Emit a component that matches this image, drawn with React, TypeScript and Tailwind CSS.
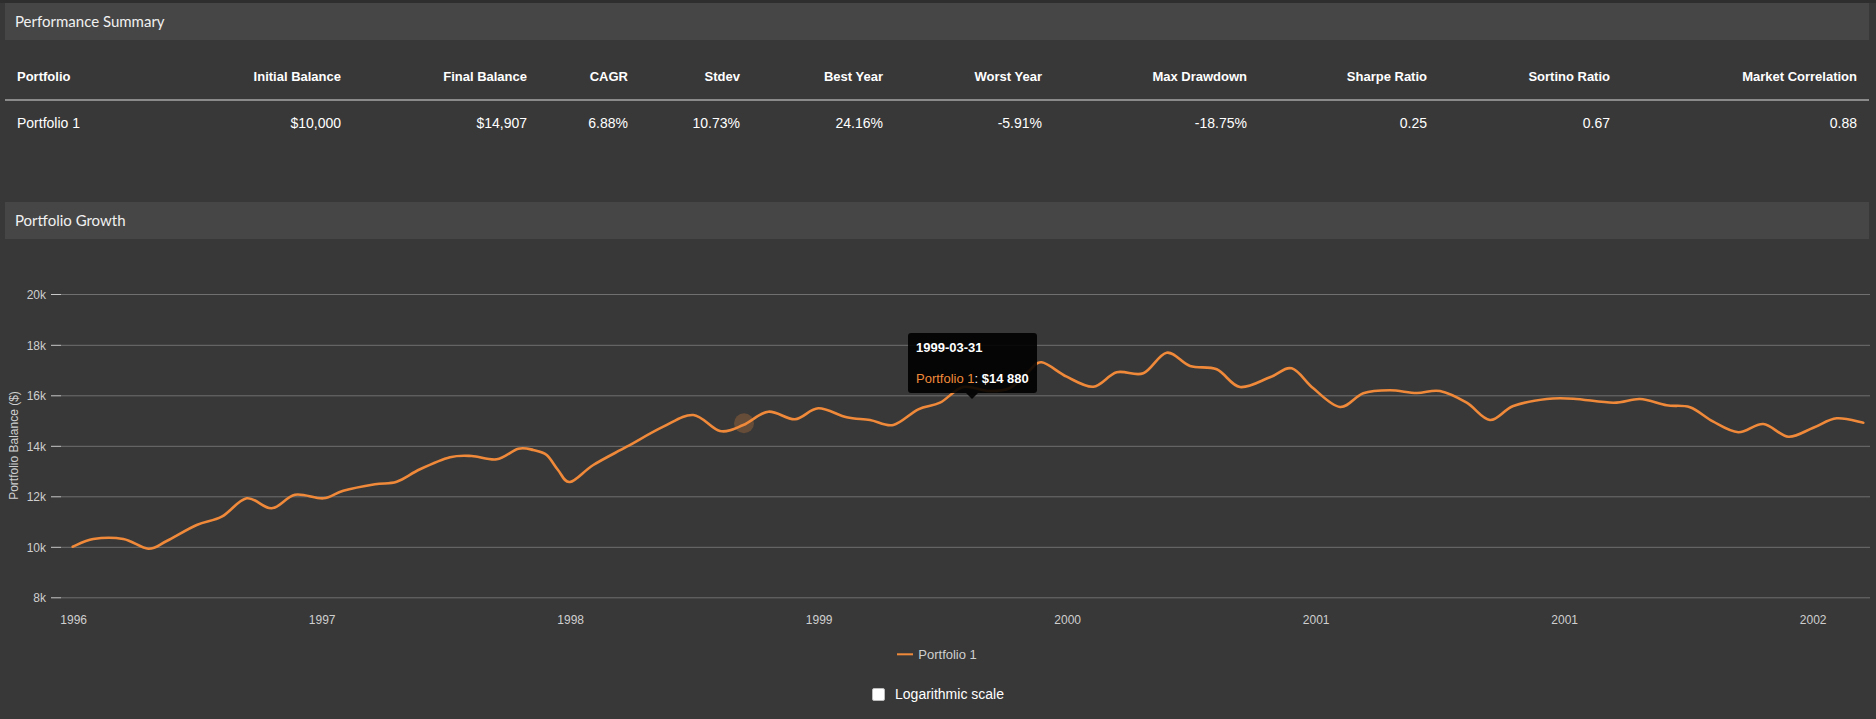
import React from "react";

const PTS: [number, number][] = [
  [72.7, 546.7], [93.3, 539], [123.3, 539], [148.3, 548.7], [166.7, 541], [196.7, 525],
  [221.7, 516.7], [246.7, 498.3], [271.7, 508.3], [295, 494.7], [323.3, 498.3], [343.3, 490.7],
  [375, 484.3], [396.7, 481.7], [420, 469.3], [450, 457.3], [471.7, 456], [496.7, 459.3],
  [518.3, 448.7], [533.3, 450], [546.7, 455], [558, 470], [570, 482], [593.3, 465],
  [626.7, 446.7], [663.3, 426.7], [693.3, 415], [720, 431], [743.3, 425], [768.3, 411.7],
  [795, 419.3], [818.3, 408.3], [846.7, 417.3], [870, 420], [893.3, 425], [918.3, 409.3],
  [940, 402.7], [963, 387], [988, 391], [1010, 388], [1028, 372], [1041.7, 362.3],
  [1066.7, 376.7], [1093.3, 386.7], [1116.7, 372.3], [1143.3, 373.3], [1166.7, 352.7],
  [1190, 366], [1216.7, 369.3], [1240, 387], [1270, 377.3], [1291.7, 368.3], [1313.3, 388.3],
  [1340, 407], [1363.3, 393.3], [1390, 390.3], [1416.7, 393], [1440, 391], [1466.7, 402.7],
  [1490, 420], [1513.3, 406], [1546.7, 399], [1573.3, 398.7], [1613.3, 402.7], [1640, 399],
  [1666.7, 405.3], [1690, 407.3], [1713.3, 421.7], [1738.3, 432.3], [1763.3, 424],
  [1788.3, 436.7], [1813.3, 427.7], [1836.7, 418.3], [1863.3, 422.7],
];

function smoothPath(pts: [number, number][]): string {
  let d = `M${pts[0][0]},${pts[0][1]}`;
  for (let i = 0; i < pts.length - 1; i++) {
    const p0 = pts[i - 1] || pts[i];
    const p1 = pts[i];
    const p2 = pts[i + 1];
    const p3 = pts[i + 2] || p2;
    const c1x = p1[0] + (p2[0] - p0[0]) / 6;
    const c1y = p1[1] + (p2[1] - p0[1]) / 6;
    const c2x = p2[0] - (p3[0] - p1[0]) / 6;
    const c2y = p2[1] - (p3[1] - p1[1]) / 6;
    d += ` C${c1x.toFixed(1)},${c1y.toFixed(1)} ${c2x.toFixed(1)},${c2y.toFixed(1)} ${p2[0]},${p2[1]}`;
  }
  return d;
}

const GRID = [
  { label: "20k", y: 294.5 },
  { label: "18k", y: 345.3 },
  { label: "16k", y: 395.8 },
  { label: "14k", y: 446.3 },
  { label: "12k", y: 496.8 },
  { label: "10k", y: 547.3 },
  { label: "8k", y: 597.8 },
];

const XLABELS = ["1996", "1997", "1998", "1999", "2000", "2001", "2001", "2002"];

const HEAD = [
  "Portfolio",
  "Initial Balance",
  "Final Balance",
  "CAGR",
  "Stdev",
  "Best Year",
  "Worst Year",
  "Max Drawdown",
  "Sharpe Ratio",
  "Sortino Ratio",
  "Market Correlation",
];
const ROW = ["Portfolio 1", "$10,000", "$14,907", "6.88%", "10.73%", "24.16%", "-5.91%", "-18.75%", "0.25", "0.67", "0.88"];

const ORANGE = "#f08a3a";

export default function App() {
  const path = smoothPath(PTS);
  return (
    <div className="w-[1876px] min-h-[719px] bg-[#383838] font-['Liberation_Sans',Arial,sans-serif]">
      <div className="h-[3px] bg-[#2e2e2e]" />
      <div className="ml-[5px] mr-[7px]">
        <div className="h-[37px] bg-[#464646] flex items-center pl-[10px] font-['Lato',sans-serif] text-[15px] text-[#f0f0f0]">
          Performance Summary
        </div>
        <div className="mt-[20px]">
          <div className="grid grid-cols-[180px_168px_186px_101px_112px_143px_159px_205px_180px_183px_1fr] border-b-2 border-[#8a8a8a]">
            {HEAD.map((h, i) => (
              <div
                key={h}
                className={`pt-[8px] pb-[13px] px-[12px] leading-[18px] text-[13px] font-bold text-white ${i === 0 ? "text-left" : "text-right"}`}
              >
                {h}
              </div>
            ))}
          </div>
          <div className="grid grid-cols-[180px_168px_186px_101px_112px_143px_159px_205px_180px_183px_1fr]">
            {ROW.map((v, i) => (
              <div
                key={i}
                className={`pt-[13px] pb-[13px] px-[12px] leading-[18px] text-[14px] text-white ${i === 0 ? "text-left" : "text-right"}`}
              >
                {v}
              </div>
            ))}
          </div>
        </div>
        <div className="mt-[57px] h-[37px] bg-[#464646] flex items-center pl-[10px] font-['Lato',sans-serif] text-[15px] text-[#f0f0f0]">
          Portfolio Growth
        </div>
      </div>

      <div className="relative">
        <svg width={1876} height={432} viewBox="0 239 1876 432" className="block">
          {GRID.map((g) => (
            <g key={g.label}>
              <line x1={51} x2={61} y1={g.y} y2={g.y} stroke="#c8c8c8" strokeWidth={1} />
              <line x1={61} x2={1870} y1={g.y} y2={g.y} stroke="#707070" strokeWidth={1} />
              <text
                x={46}
                y={g.y + 4.3}
                textAnchor="end"
                fontSize={12}
                fill="#cfcfcf"
                fontFamily="'Liberation Sans', Arial, sans-serif"
              >
                {g.label}
              </text>
            </g>
          ))}
          {XLABELS.map((l, i) => (
            <text
              key={i}
              x={73.7 + 248.5 * i}
              y={624.3}
              textAnchor="middle"
              fontSize={12}
              fill="#cfcfcf"
              fontFamily="'Liberation Sans', Arial, sans-serif"
            >
              {l}
            </text>
          ))}
          <text
            transform="translate(17.5,445.5) rotate(-90)"
            textAnchor="middle"
            fontSize={12}
            fill="#cfcfcf"
            fontFamily="'Liberation Sans', Arial, sans-serif"
          >
            Portfolio Balance ($)
          </text>
          <path d={path} fill="none" stroke={ORANGE} strokeWidth={2.6} strokeLinejoin="round" strokeLinecap="round" />
          <circle cx={744} cy={423.3} r={10} fill={ORANGE} fillOpacity={0.25} />
          <line x1={897} x2={913} y1={654.3} y2={654.3} stroke={ORANGE} strokeWidth={2} />
          <text
            x={918.3}
            y={658.8}
            fontSize={13}
            fill="#cfcfcf"
            fontFamily="'Liberation Sans', Arial, sans-serif"
          >
            Portfolio 1
          </text>
        </svg>

        <div className="absolute left-[908px] top-[94px] w-[129px] h-[60px] bg-black/90 rounded-[3px] pl-[8px] pt-[6px] text-[13px] text-white whitespace-nowrap">
          <div className="leading-[18px] font-bold">1999-03-31</div>
          <div className="mt-[13px] leading-[18px]">
            <span className="text-[#f08a3a]">Portfolio 1</span>: <span className="font-bold">$14 880</span>
          </div>
        </div>
        <div className="absolute left-[966px] top-[154px] w-0 h-0 border-l-[6px] border-r-[6px] border-t-[6px] border-l-transparent border-r-transparent border-t-black/90" />
      </div>

      <div className="mt-[13px] h-[20px] flex items-center justify-center gap-[10px]">
        <span className="block w-[13px] h-[13px] bg-white rounded-[2px] border border-[#bdbdbd]" />
        <span className="text-[14px] text-white leading-[20px]">Logarithmic scale</span>
      </div>
    </div>
  );
}
